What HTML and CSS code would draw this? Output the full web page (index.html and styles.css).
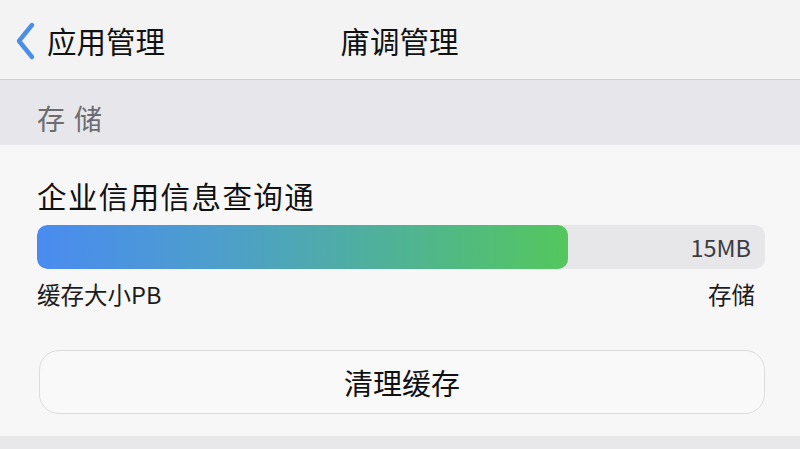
FILE: index.html
```html
<!DOCTYPE html>
<html lang="zh-CN">
<head>
	<meta charset="UTF-8">
	<title>庯调管理</title>
	<link rel="stylesheet" href="styles.css">
</head>
<body>
<!-- 顶部导航 -->
<div class="nav">
	<a href="#" class="back">
		<svg class="chev" width="24" height="40" viewBox="0 0 24 40"><path d="M19 4 L6 20 L19 36" fill="none" stroke="#4a8ee6" stroke-width="4.4" stroke-linecap="round" stroke-linejoin="round"/></svg>
		<span>应用管理</span>
	</a>
	<div class="title">庯调管理</div>
	<div class="spacer"></div>
</div>
<!-- 分组标题 -->
<div class="group">存储</div>
<!-- 内容 -->
<div class="card">
	<div class="app-name">企业信用信息查询通</div>
	<div class="bar">
		<div class="fill"></div>
		<span class="size">15MB</span>
	</div>
	<div class="labels">
		<span>缓存大小PB</span>
		<span>存储</span>
	</div>
	<a href="#" class="btn">清理缓存</a>
</div>
<div class="foot"></div>
</body>
</html>
```

FILE: styles.css
```css
body{margin: 0;padding: 0;background: #f7f7f7;font-family: "Noto Sans CJK SC", "Noto Sans", sans-serif;color: #111;}
a{text-decoration: none;color: inherit;}

/* 导航栏 */
.nav{height: 79px;background: #f3f3f3;border-bottom: 1px solid #cfcfd1;display: flex;align-items: center;padding: 0 14px 0 13px;}
.nav .back{display: flex;align-items: center;gap: 10px;flex: 1;}
.nav .back span{font-size: 29.5px;}
.nav .chev{margin-top: 2px;}
.nav .title{font-size: 29.5px;flex: none;}
.nav .spacer{flex: 1;}

/* 分组 */
.group{height: 55px;background: #e7e7eb;display: flex;align-items: center;padding: 10px 0 0 37px;font-size: 28px;letter-spacing: 9px;color: #6c6c70;}

/* 内容卡片 */
.card{background: #f7f7f7;padding: 30px 35px 22px 37px;}
.app-name{font-size: 29.5px;line-height: 40px;letter-spacing: 1.4px;}
.bar{margin-top: 10px;height: 44px;border-radius: 10px;background: #e7e7e9;display: flex;align-items: center;justify-content: space-between;overflow: hidden;}
.bar .fill{width: 531px;height: 100%;border-radius: 10px;background: linear-gradient(90deg, #4a8bf0 0%, #4d9fcb 35%, #4fb19a 65%, #54c75d 100%);}
.bar .size{font-size: 23.5px;color: #3c3c3e;padding-right: 14px;}
.labels{margin-top: 9px;display: flex;justify-content: space-between;font-size: 23.5px;line-height: 32px;padding-right: 10px;color: #1c1c1c;}
.btn{display: flex;align-items: center;justify-content: center;margin: 40px 0 0 2px;height: 62px;border: 1.5px solid #dcdcdc;border-radius: 20px;background: #f9f9f9;font-size: 29px;}

.foot{height: 20px;background: #e8e8ea;}
```
